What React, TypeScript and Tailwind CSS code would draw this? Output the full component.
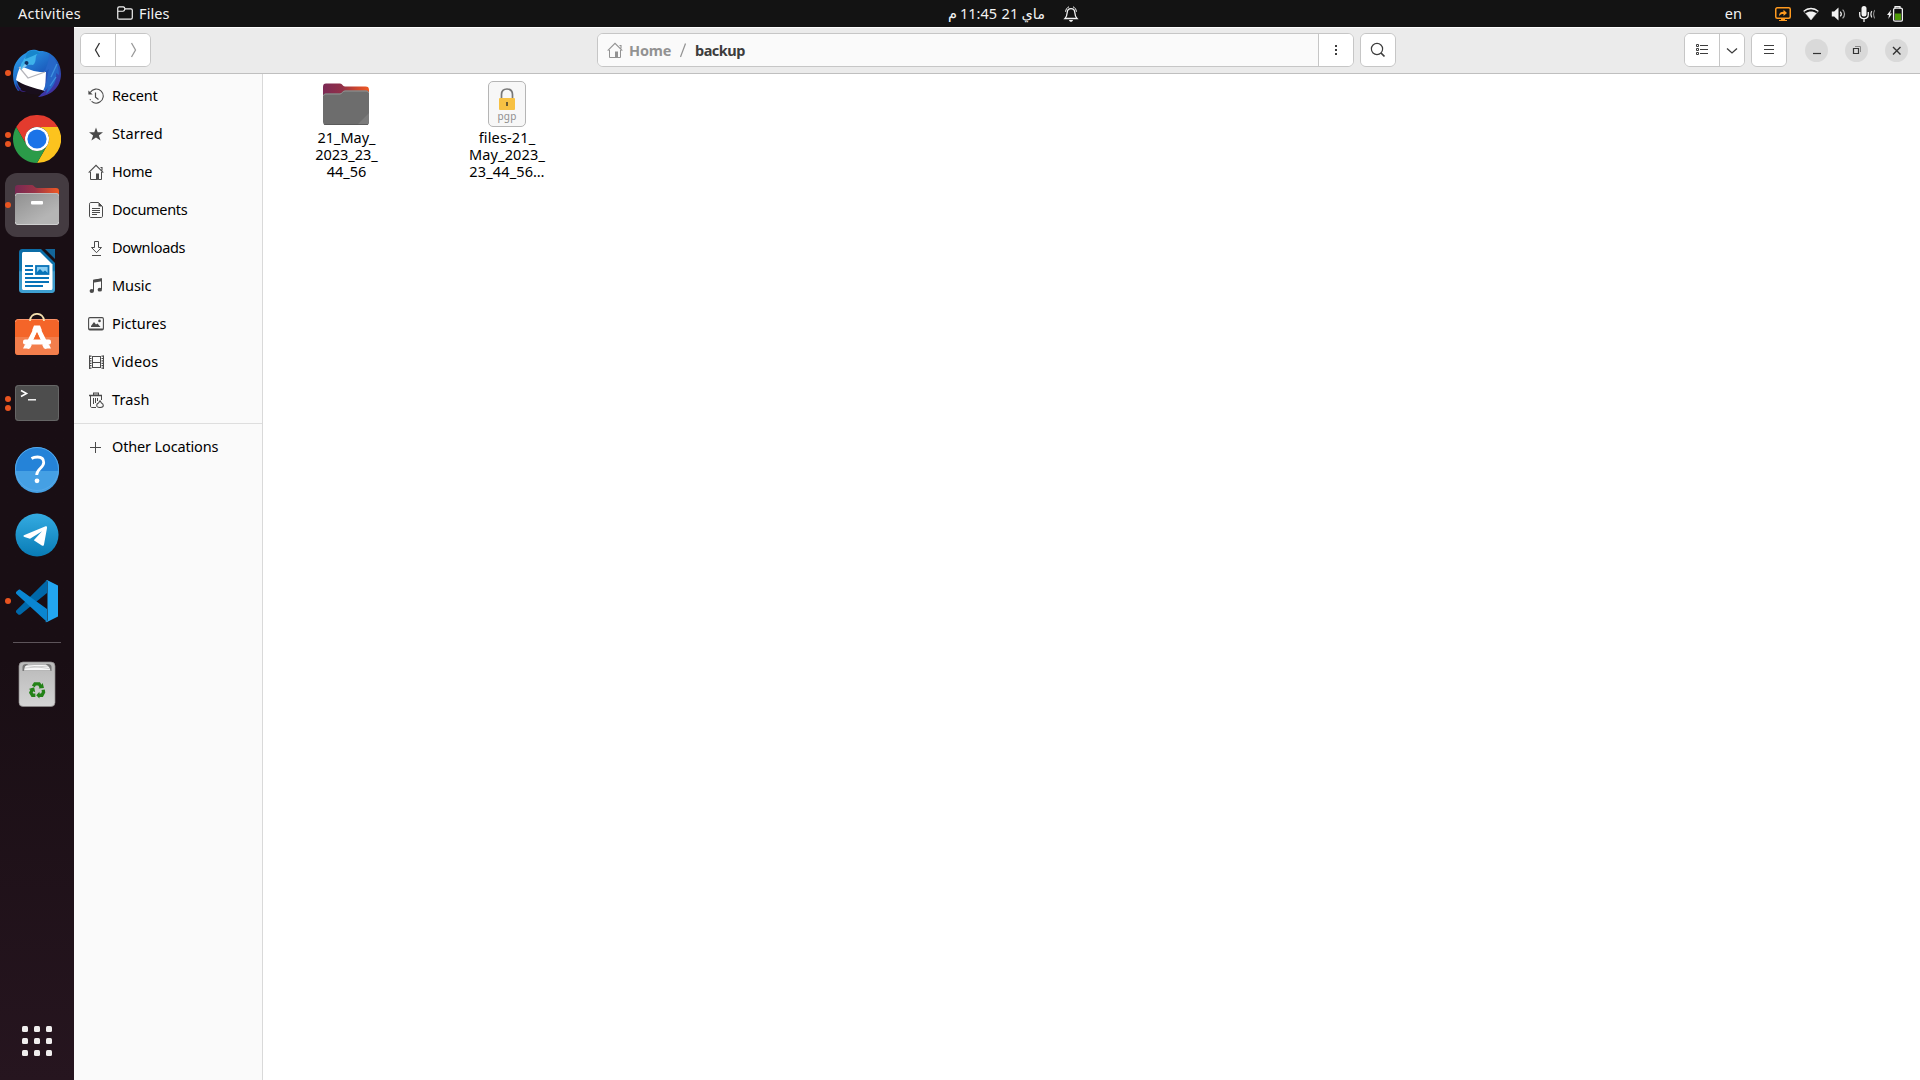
import React from "react";

const FONT = "font-['Noto_Sans','DejaVu_Sans',sans-serif]";

function S({ size = 16, className = "", children }: { size?: number; className?: string; children: React.ReactNode }) {
  return (
    <svg width={size} height={size} viewBox={`0 0 ${size} ${size}`} fill="none" className={`block shrink-0 ${className}`}>
      {children}
    </svg>
  );
}

/* ---------- symbolic icons ---------- */

const FolderSmall = () => (
  <S>
    <path d="M.75 12.5V2.2C.75 1.3 1.3.8 2.1.8H6.3C7 .8 7.2 1.2 7.5 1.7L8 2.8H13.9C14.8 2.8 15.3 3.3 15.3 4.2V11.6C15.3 12.5 14.8 13.2 13.9 13.2H2.1C1.2 13.2.75 12.8.75 12Z" stroke="#f2f2f2" strokeWidth="1.2" />
    <path d="M1 5.2H6C7 5.2 7.4 4.8 8 3" stroke="#f2f2f2" strokeWidth="1.1" />
  </S>
);

const Bell = () => (
  <S>
    <path d="M2 12.5C3.6 11 4 9 4.2 6.5C4.4 4 5.8 2.6 8 2.6S11.6 4 11.8 6.5C12 9 12.4 11 14 12.5Z" stroke="#f2f2f2" strokeWidth="1.3" />
    <path d="M2.6 5.8C2.8 3.2 4 1.6 6 .8M13.4 5.8C13.2 3.2 12 1.6 10 .8" stroke="#f2f2f2" strokeWidth="1" />
    <path d="M6 14h4c-.2 1.2-1 1.8-2 1.8S6.200 15.200 6 14Z" fill="#f2f2f2" />
  </S>
);

const ScreenShare = () => (
  <S>
    <rect x=".75" y="1.750" width="14.500" height="10.500" rx="1.500" stroke="#ff9a1f" strokeWidth="1.500" />
    <path d="M6 13h4v1h2v1H4v-1h2Z" fill="#ff9a1f" />
    <path d="M4 10.200C4 7.200 5.400 5.800 8.500 5.800V3.700L12 7 8.500 10V8C6.500 8 5 8.600 4 10.200Z" fill="#ff9a1f" />
  </S>
);

const Wifi = () => (
  <S>
    <path d="M8 14 .6 5.200C4.800 1.500 11.200 1.500 15.400 5.200Z" stroke="#8a8a8a" strokeWidth=".8" fill="#131313" />
    <path d="M.8 5.200C4.900 1.600 11.100 1.600 15.200 5.200" stroke="#f2f2f2" strokeWidth="1.300" />
    <path d="M8 14 2.600 7.300C5.600 4.900 10.400 4.900 13.400 7.300Z" fill="#f2f2f2" />
  </S>
);

const Volume = () => (
  <S>
    <path d="M.8 5.500H3.200L7.500 1.500V14.500L3.200 10.500H.8Z" fill="#f2f2f2" />
    <path d="M9.300 5.600C10.500 7 10.500 9 9.300 10.400" stroke="#f2f2f2" strokeWidth="1.200" />
    <path d="M11.600 3.600C14.200 6 14.200 10 11.600 12.400" stroke="#a8a8a8" strokeWidth="1.200" />
  </S>
);

const Mic = () => (
  <S>
    <rect x="2.500" y="0" width="5" height="10.500" rx="2.500" fill="#f2f2f2" />
    <path d="M.7 6V8.500C.7 11 2.500 12.600 5 12.600S9.300 11 9.300 8.500V6M5 12.600V16" stroke="#f2f2f2" strokeWidth="1.300" />
    <path d="M12.800 5C11.600 7 11.600 9.500 12.800 11.500" stroke="#dedede" strokeWidth="1.100" />
    <path d="M16 4C14.300 6.500 14.300 10 16 12.500" stroke="#8c8c8c" strokeWidth="1.100" />
  </S>
);

const Battery = () => (
  <S>
    <path d="M4.200 3.500 0 9H2L1.300 13 5 7.500H3Z" fill="#f2f2f2" />
    <path d="M8 2.600V.7h5v1.900" stroke="#f2f2f2" strokeWidth="1.200" />
    <rect x="6.600" y="2.200" width="8.800" height="13" rx="1.500" stroke="#f2f2f2" strokeWidth="1.300" />
    <rect x="8" y="7.500" width="6" height="6.500" fill="#4e9a06" />
  </S>
);

const House = ({ color = "#4a4a4a" }: { color?: string }) => (
  <S>
    <path d="M.7 8.700 8 1.400 15.300 8.700M12.500 3.500h1.500v3" stroke={color} strokeWidth="1.100" />
    <path d="M2.500 8v7.500H9M13.500 8v7.500H11" stroke={color} />
    <path d="M8 15.900V9.500h3v6.400Z" fill={color} />
  </S>
);

const G = "#4a4a4a";
const Recent = () => (
  <S>
    <path d="M2.200 4.500A7 7 0 1 1 1.500 10" stroke={G} strokeWidth="1.100" strokeDasharray="34 1.500 1 1.500" />
    <path d="M.4 2.400V6.400H4.700Z" fill={G} />
    <path d="M7.500 4.500V9.200L10.500 11.500" stroke={G} strokeWidth="1.200" />
  </S>
);
const Star = () => (
  <S>
    <path d="M8 1.600 9.700 6.300H15L10.900 9.500 12.600 14.600 8 11.500 3.400 14.600 5.100 9.500 1 6.300H6.300Z" fill={G} />
  </S>
);
const Doc = () => (
  <S>
    <path d="M1.500 2.200C1.500 1 2.100.5 3 .5H10.500L14.500 4.500V14C14.500 15 14 15.500 13 15.500H3C2 15.500 1.500 15 1.500 14Z" stroke={G} />
    <path d="M10.500.5V4.500H14.500Z" fill={G} />
    <path d="M4 6.500h8M4 8.500h8M4 10.500h8M4 12.500h5" stroke={G} />
  </S>
);
const Down = () => (
  <S>
    <path d="M6.500 1.500h4v6h3L8.500 12.700 3.500 7.500h3Z" stroke={G} />
    <path d="M4 15.500h9" stroke={G} />
  </S>
);
const Music = () => (
  <S>
    <path d="M5.500 13V2.500L13.500 1V11" stroke={G} />
    <path d="M5 1.800 14 .3V3.200L5 4.700Z" fill={G} />
    <ellipse cx="3.800" cy="13" rx="2.200" ry="1.900" fill={G} />
    <ellipse cx="11.800" cy="11.700" rx="2.200" ry="1.900" fill={G} />
  </S>
);
const Picture = () => (
  <S>
    <rect x=".6" y="1.600" width="14.800" height="12.300" rx="1.300" stroke={G} strokeWidth="1.100" />
    <path d="M1 12.500h14v1.500H1Z" fill={G} />
    <path d="M3 11V10L6 6 8 8.500 9.500 7.500 12.500 11Z" fill={G} />
    <circle cx="11.500" cy="4.900" r="1.300" fill={G} />
  </S>
);
const Film = () => (
  <S>
    <path d="M4.500 2v12M12.500 2v12M4 2.500h9M4 8.500h9M4 13.500h9" stroke={G} />
    <path d="M2.500 1.500V15M14.500 1.500V15" stroke={G} strokeWidth="2" strokeDasharray="1.200 1.200" />
    <path d="M1.500 1.500V15M15.500 1.500V15" stroke={G} strokeWidth="1" />
  </S>
);
const TrashSmall = () => (
  <S>
    <path d="M1 4V2.800h4V.6h6v2.200h3V4.200H1Z" fill={G} />
    <path d="M6 2h4" stroke="#fafafa" strokeWidth=".8" />
    <path d="M2.500 4v10c0 1 .5 1.500 1.500 1.500H8M13.500 4v4M5.500 6v6M7.500 6v5M9.500 6v3" stroke={G} />
    <path d="M12 8.800 10.500 11C9 11.500 8.500 13 9 14.500C10 15.800 13.500 15.800 15 14.500C15.600 13 14.500 11.500 13.500 11Z" stroke={G} strokeWidth="1.100" />
  </S>
);
const Plus = () => (
  <S>
    <path d="M2 8.500h11M7.500 3v11" stroke={G} />
  </S>
);

/* ---------- dock icons ---------- */

const Thunderbird = () => (
  <S size={48}>
    <defs>
      <linearGradient id="tb" x1="10" y1="2" x2="40" y2="46" gradientUnits="userSpaceOnUse">
        <stop stopColor="#2b9be8" />
        <stop offset=".5" stopColor="#1c60c0" />
        <stop offset="1" stopColor="#452a9c" />
      </linearGradient>
    </defs>
    <path d="M13 4C16 0 22 0 26 2C38 1 48 12 48 25C48 38 38 47 25 48C31 44 31 38 27 30L5 42C0 36-1 26 1 18C3 12 8 6 13 4Z" fill="url(#tb)" />
    <path d="M4 32 32 41C31 44 27 45.500 23 45.500C18 46 14 44.500 12 43C8 41 5 37 4 32Z" fill="#190e1c" />
    <path d="M3 34C5 39 8 42 13 42.500C10 44 6 42 4 39Z" fill="#352078" />
    <path d="M8 17C14 20 24 24 33 23L32 42C21 39 10 36 3 31C4 26 5 21 8 17Z" fill="#fff" />
    <path d="M6 18 15 29 32 23" stroke="#b5b5bb" strokeWidth="1.200" />
    <path d="M10 12C13 5 20 2 27 3C20 6 25 12 20 16C15 15 12 16 8 21C7 17 8 14 10 12Z" fill="#3eb2ea" />
    <path d="M14 4C18 0 24 1 28 5C23 4 20 8 12 10Z" fill="#1786cc" />
    <circle cx="13.500" cy="14" r="2" fill="#103264" />
    <path d="M12 15 8 20 14 17Z" fill="#89caee" />
    <path d="M36 5C36 14 33 17 32 23L36 20C34 27 34 34 30 42C32 42 34 40 35 38L33 45C40 39 44 32 43 24L46 26C46 18 43 9 36 5Z" fill="#2667c8" />
    <path d="M44 15 38 28M43 28 37 37" stroke="#4092df" strokeWidth="1.300" />
  </S>
);

const Chrome = () => (
  <S size={48}>
    <path d="M3.220 12A24 24 0 0 1 44.800 12H24A12 12 0 0 0 13.600 30Z" fill="#e33b2e" />
    <path d="M44.800 12A24 24 0 0 1 24 48L34.400 30A12 12 0 0 0 24 12Z" fill="#fcc31e" />
    <path d="M24 48A24 24 0 0 1 3.220 12L13.600 30A12 12 0 0 0 34.400 30Z" fill="#2b9b49" />
    <circle cx="24" cy="24" r="12" fill="#fff" />
    <circle cx="24" cy="24" r="9.600" fill="#1a73e8" />
  </S>
);

const FilesApp = () => (
  <S size={48}>
    <defs>
      <linearGradient id="fa" x1="2" y1="0" x2="46" y2="0" gradientUnits="userSpaceOnUse">
        <stop stopColor="#772953" />
        <stop offset=".45" stopColor="#9a3347" />
        <stop offset="1" stopColor="#f05a24" />
      </linearGradient>
      <linearGradient id="fb" x1="0" y1="12" x2="20" y2="44" gradientUnits="userSpaceOnUse">
        <stop stopColor="#8e8e8e" />
        <stop offset="1" stopColor="#b5b5b5" />
      </linearGradient>
    </defs>
    <path d="M2 7C2 5 3 4 5 4H19C21 4 21.500 7 24 7H43C45 7 46 8 46 10V24H2Z" fill="url(#fa)" />
    <rect x="2" y="12" width="44" height="32" rx="3" fill="url(#fb)" />
    <path d="M2.500 15C2.500 13 3.500 12.500 5 12.500H43C44.500 12.500 45.500 13 45.500 15" stroke="#c0bcbc" />
    <path d="M2.500 41C2.500 43 3.500 43.500 5 43.500H43C44.500 43.500 45.500 43 45.500 41" stroke="#d0d0d0" />
    <rect x="18" y="20" width="12" height="3.500" rx="1" fill="#fff" />
  </S>
);

const Writer = () => (
  <S size={48}>
    <defs>
      <linearGradient id="wr" x1="0" y1="2" x2="0" y2="46" gradientUnits="userSpaceOnUse">
        <stop stopColor="#0c6ca6" />
        <stop offset=".48" stopColor="#0f76ae" />
        <stop offset=".52" stopColor="#3994c4" />
        <stop offset="1" stopColor="#3ea0d2" />
      </linearGradient>
    </defs>
    <path d="M10 2H28L42 16V42C42 45 41 46 38 46H10C7 46 6 45 6 42V6C6 3 7 2 10 2Z" fill="url(#wr)" />
    <path d="M32 2H42V12Z" fill="#13669a" />
    <path d="M11 5H27L39.500 17.500V41C39.500 42.500 39 43 37.500 43H11C9.500 43 9 42.500 9 41V7C9 5.500 9.500 5 11 5Z" fill="#fff" />
    <path d="M12 19h8M12 23h8M12 27h8M12 31h24M12 35h24M12 39h18" stroke="#0873b8" strokeWidth="2" />
    <rect x="23" y="19" width="12.500" height="8" stroke="#0873b8" strokeWidth="1.800" fill="#8acdf2" />
    <path d="M24 27V25L27 22 30 25 32 23.500 35 26V27Z" fill="#0873b8" />
  </S>
);

const Software = () => (
  <S size={48}>
    <rect x="2" y="6" width="44" height="36" rx="3.500" fill="#f46529" />
    <path d="M2 24H46V38.500C46 41 45 42 42.500 42H5.500C3 42 2 41 2 38.500Z" fill="#f37e4c" />
    <path d="M2.500 9C2.500 7 4 6.500 5.500 6.500H42.500C44 6.500 45.500 7 45.500 9" stroke="#f9946c" />
    <path d="M17 8C17-1.500 31-1.500 31 8" stroke="#f3dfae" strokeWidth="1.800" />
    <path d="M24 14 13.500 35M24 14 34.500 35" stroke="#fff" strokeWidth="5" />
    <path d="M21 12.500h6l2 5h-10Z" fill="#fff" />
    <path d="M10 35.500h7l2-4h-7ZM38 35.500h-7l-2-4h7Z" fill="#fff" />
    <path d="M24 19 20.500 27h7Z" fill="#f46529" />
    <rect x="10" y="26.500" width="28" height="5" rx="2" fill="#fff" />
  </S>
);

const Terminal = () => (
  <S size={48}>
    <rect x="2" y="6" width="44" height="36" rx="3.500" fill="#4d4d4d" />
    <rect x="2.500" y="6.500" width="43" height="35" rx="3" stroke="#666" />
    <path d="M8 11.500 13.500 14.500 8 17.500" stroke="#fff" strokeWidth="1.600" />
    <path d="M15 20.800h8" stroke="#fff" strokeWidth="1.400" />
  </S>
);

const Help = () => (
  <S size={48}>
    <circle cx="24" cy="24" r="22" fill="#2583d8" />
    <path d="M2 26H46A22 22 0 0 1 2 26Z" fill="#45a0e4" />
    <circle cx="24" cy="24" r="21.500" stroke="#55a9e9" />
    <path d="M18.500 13.500C20.500 12.300 22.500 12 24.500 12C29 12 30.700 14.500 30.700 17.500C30.700 23 23.700 23.500 23.700 30" stroke="#fff" strokeWidth="2.800" />
    <circle cx="24" cy="35.800" r="2.400" fill="#fff" />
  </S>
);

const Telegram = () => (
  <S size={48}>
    <defs>
      <linearGradient id="tg" x1="0" y1="2" x2="0" y2="46" gradientUnits="userSpaceOnUse">
        <stop stopColor="#35ace2" />
        <stop offset="1" stopColor="#087bb5" />
      </linearGradient>
    </defs>
    <circle cx="24" cy="24" r="21.500" fill="url(#tg)" />
    <path d="M11.500 24 32 15.400C33.600 14.800 34.200 15.500 34 17L31 33.500C30.700 35 30 35.200 28.800 34.400L20.800 29.200 29 20.300 17 27.800 11.500 26C10 25.500 10 24.700 11.500 24Z" fill="#fff" />
  </S>
);

const VSCode = () => (
  <S size={48}>
    <path d="M34 3V16L7.500 37.500C6.700 38 5.800 38 5 37.300L3.300 35.500C2.800 34.800 2.800 34 3.500 33.300Z" fill="#0068a9" />
    <path d="M34 45V32L7.500 13C6.700 12.400 5.800 12.400 5 13.200L3.300 14.800C2.800 15.500 2.800 16.300 3.500 17Z" fill="#0a86d1" />
    <path d="M34 3 45 8.500V39.500L34 45C33 45.400 32 45 31.500 44.500C33 45 34.500 44.500 34.500 43V5C34.500 3.500 33 3 31.500 3.500Z" fill="#22a6f1" />
  </S>
);

const TrashApp = () => (
  <S size={48}>
    <defs>
      <linearGradient id="tr" x1="0" y1="8" x2="0" y2="47" gradientUnits="userSpaceOnUse">
        <stop stopColor="#bcbcbc" />
        <stop offset="1" stopColor="#d4d4d4" />
      </linearGradient>
    </defs>
    <rect x="6" y="2" width="36" height="44.500" rx="4" fill="url(#tr)" stroke="#8d8989" strokeWidth=".7" />
    <path d="M9.500 11V7C9.500 5 11 4 13 4H35C37 4 38.500 5 38.500 7V11Z" fill="#777" />
    <path d="M11 10.500 12 6.500 15 4.500H33L36 7 37.500 10.500Z" fill="#f8f8f8" />
    <path d="M12 8 35 6M14 5.500 36 8.500" stroke="#bbb" strokeWidth=".7" />
    <g transform="translate(24 30.500) scale(.82) translate(-24 -30)">
      <path d="M19.500 25 21.500 21.800H26.500L29 25.500M31.500 29 32 32 30 35.800H26M22 35.800H18.500L16.500 32.500 18.500 28.500" stroke="#238217" strokeWidth="4" />
      <path d="M26 27.500 32.500 27 31 21ZM27 31.500V39.800L23 35.800ZM14 28.300 20.500 26 21.800 32Z" fill="#238217" />
    </g>
  </S>
);

const DOCK: { icon: React.FC; dots: number; active?: boolean }[] = [
  { icon: Thunderbird, dots: 1 },
  { icon: Chrome, dots: 2 },
  { icon: FilesApp, dots: 1, active: true },
  { icon: Writer, dots: 0 },
  { icon: Software, dots: 0 },
  { icon: Terminal, dots: 2 },
  { icon: Help, dots: 0 },
  { icon: Telegram, dots: 0 },
  { icon: VSCode, dots: 1 },
];

function DockItem({ icon: Icon, dots, active }: { icon: React.FC; dots: number; active?: boolean }) {
  return (
    <div className="relative flex h-[66px] w-full shrink-0 items-center justify-center">
      <div className={`flex size-16 items-center justify-center rounded-xl ${active ? "bg-[#443b41]" : ""}`}>
        <Icon />
      </div>
      <div className="absolute inset-y-0 left-[5px] flex flex-col items-center justify-center gap-[3px]">
        {Array.from({ length: dots }, (_, i) => (
          <span key={i} className="size-[6px] rounded-full bg-[#e95420]" />
        ))}
      </div>
    </div>
  );
}

const PLACES: { label: string; icon: React.FC; track: string }[] = [
  { label: "Recent", icon: Recent, track: "tracking-[-0.15px]" },
  { label: "Starred", icon: Star, track: "tracking-[0.1px]" },
  { label: "Home", icon: House, track: "tracking-[-0.3px]" },
  { label: "Documents", icon: Doc, track: "tracking-[-0.3px]" },
  { label: "Downloads", icon: Down, track: "tracking-[-0.3px]" },
  { label: "Music", icon: Music, track: "tracking-[-0.1px]" },
  { label: "Pictures", icon: Picture, track: "tracking-[0px]" },
  { label: "Videos", icon: Film, track: "tracking-[0.2px]" },
  { label: "Trash", icon: TrashSmall, track: "tracking-[0.1px]" },
];

function Place({ label, icon: Icon, track }: { label: string; icon: React.FC; track: string }) {
  return (
    <div className="flex h-[38px] items-center gap-2 pl-[14px] text-black">
      <Icon />
      <span className={`whitespace-nowrap pb-[2px] leading-5 ${track}`}>{label}</span>
    </div>
  );
}

function FileItem({ icon, lines, className, track }: { icon: React.ReactNode; lines: string[]; className: string; track: string }) {
  return (
    <div className={`flex flex-col items-center ${className}`}>
      {icon}
      <div className={`mt-[1px] text-center leading-[17px] text-black ${track}`}>
        {lines.map((l) => (
          <div key={l} className="whitespace-nowrap">{l}</div>
        ))}
      </div>
    </div>
  );
}

const BigFolder = () => (
  <S size={48} className="mr-[2px]">
    <defs>
      <linearGradient id="bf" x1="1" y1="0" x2="47" y2="0" gradientUnits="userSpaceOnUse">
        <stop stopColor="#7c2a55" />
        <stop offset=".42" stopColor="#923048" />
        <stop offset=".7" stopColor="#c8432f" />
        <stop offset="1" stopColor="#f05a24" />
      </linearGradient>
    </defs>
    <path d="M1 7C1 4.500 2 3.500 4 3.500H18C20.500 3.500 20.500 6.500 23 6.500H43.500C46 6.500 47 7.500 47 10V25H1Z" fill="url(#bf)" />
    <path d="M1 17C1 14.500 2 13.500 4 13.500H18C20.500 13.500 20 10.500 23 10.500H44C46 10.500 47 11.500 47 13.500V41.500C47 44 46 45 44 45H4C2 45 1 44 1 41.500Z" fill="#6d6d6d" />
    <path d="M35 45 47 33V41.500C47 44 46 45 44 45Z" fill="#7b7b7b" />
    <path d="M1.500 16C1.700 14.500 2.500 14 4 14H18C20.500 14 20 11 23 11H44C45.500 11 46.300 11.500 46.500 13" stroke="#939393" />
    <path d="M2 44.500H46" stroke="#555" strokeWidth=".8" />
  </S>
);

const PgpIcon = () => (
  <div className="mt-px flex h-[46px] w-[38px] flex-col items-center rounded-[5px] border border-[#b5b5b5] bg-[#f7f7f7] pt-[6px]">
    <svg width="16" height="22" viewBox="0 0 16 22" fill="none" className="block shrink-0">
      <path d="M2.500 10V6.500C2.500 3 4.500 1 8 1S13.500 3 13.500 6.500V10" stroke="#777" strokeWidth="1.700" />
      <rect y="10" width="16" height="12" rx="1" fill="#f7c143" />
      <path d="M7 14h2v4H7Z" fill="#6b5a30" />
    </svg>
    <span className="text-[10px] leading-[12px] tracking-[0.2px] text-[#8f8f8f]">pgp</span>
  </div>
);

const Btn = "flex items-center justify-center bg-white";
const Box = "flex h-[34px] shrink-0 overflow-hidden rounded-md border border-[#c6c6c6] bg-white";

export default function App() {
  return (
    <div className={`flex h-[1080px] w-[1920px] flex-col overflow-hidden bg-white text-[14.500px] ${FONT}`}>
      <header className="flex h-[27px] shrink-0 items-center bg-[#131313] pr-[17px] pl-[18px] leading-5 text-[#f2f2f2]">
        <span className="w-[99px] pb-[2px] tracking-[0.25px]">Activities</span>
        <FolderSmall />
        <span className="ml-[6px] w-[809px] pb-[2px] tracking-[0.1px]">Files</span>
        <div className="flex w-[97px] pb-[2px] whitespace-nowrap">
          <span className="w-3">م</span>
          <span className="w-[42px]">11:45</span>
          <span className="w-5">21</span>
          <span>ماي</span>
        </div>
        <div className="ml-[18px]"><Bell /></div>
        <span className="ml-auto mr-[33px] pb-[2px]">en</span>
        <div className="flex gap-3">
          <ScreenShare />
          <Wifi />
          <Volume />
          <Mic />
          <Battery />
        </div>
      </header>

      <div className="flex min-h-0 flex-1">
        <nav className="flex w-[74px] shrink-0 flex-col items-center bg-linear-to-b from-[#190e14] from-60% to-[#26151f] pt-[13px]">
          {DOCK.map((d, i) => (
            <DockItem key={i} {...d} />
          ))}
          <div className="my-2 h-px w-12 shrink-0 bg-[#5d545a]" />
          <DockItem icon={TrashApp} dots={0} />
          <div className="mt-auto mb-6 grid grid-cols-3 gap-[6px]">
            {Array.from({ length: 9 }, (_, i) => (
              <span key={i} className="size-[6px] rounded-[1.500px] bg-[#f0eeee]" />
            ))}
          </div>
        </nav>

        <main className="flex min-w-0 flex-1 flex-col">
          <div className="flex h-[47px] shrink-0 items-center border-t border-b border-t-white border-b-[#bfbfbf] bg-[#ebebeb] pb-px pl-[6px]">
            <div className={`${Box} w-[71px]`}>
              <div className={`${Btn} w-[35px] border-r border-[#c6c6c6]`}>
                <S><path d="M9.500 1 5.500 8 9.500 15" stroke="#333" strokeWidth="1.300" /></S>
              </div>
              <div className={`${Btn} flex-1 bg-[#fafafa]`}>
                <S><path d="M6.500 1 10.500 8 6.500 15" stroke="#999" strokeWidth="1.300" /></S>
              </div>
            </div>
            <div className={`${Box} ml-[446px] w-[757px] font-bold`}>
              <div className="flex flex-1 items-center bg-[#fafafa] pl-[9px] leading-5 text-[#929292]">
                <House color="#929292" />
                <span className="ml-[6px] w-[51px] pb-px tracking-[-0.200px]">Home</span>
                <svg width="6" height="16" viewBox="0 0 6 16" fill="none" className="block"><path d="M5.500 1.500.5 15" stroke="#929292" strokeWidth="1.200" /></svg>
                <span className="ml-[9px] pb-px tracking-[-0.5px] text-[#3d3d3d]">backup</span>
              </div>
              <div className={`${Btn} w-[35px] border-l border-[#c6c6c6]`}>
                <S><path d="M7 3h2v2H7ZM7 7h2v2H7ZM7 11h2v2H7Z" fill="#3d3d3d" /></S>
              </div>
            </div>
            <div className={`${Box} ml-[6px] w-9`}>
              <div className={`${Btn} flex-1`}>
                <S><circle cx="7" cy="7" r="5.600" stroke="#3d3d3d" strokeWidth="1.200" /><path d="M11 11 14.500 14.500" stroke="#3d3d3d" strokeWidth="1.700" /></S>
              </div>
            </div>
            <div className={`${Box} ml-[288px] w-[61px]`}>
              <div className={`${Btn} w-[35px] border-r border-[#c6c6c6]`}>
                <S><path d="M6 3.500h8M6 7.500h8M6 11.500h8M2.500 2.500h2v2h-2ZM2.500 6.500h2v2h-2ZM2.500 10.500h2v2h-2Z" stroke="#3d3d3d" /></S>
              </div>
              <div className={`${Btn} flex-1`}>
                <S><path d="M3 6.500 8 11 13 6.500" stroke="#3d3d3d" strokeWidth="1.300" /></S>
              </div>
            </div>
            <div className={`${Box} ml-[6px] w-9`}>
              <div className={`${Btn} flex-1`}>
                <S><path d="M3 3.500h10M3 7.500h10M3 11.500h10" stroke="#3d3d3d" /></S>
              </div>
            </div>
            <div className="ml-[18px] flex gap-[17px]">
              <div className="flex size-[23px] items-center justify-center rounded-full bg-[#d9d9d9]">
                <svg width="23" height="23" fill="none"><path d="M8 14.500h8" stroke="#333" strokeWidth="1.200" /></svg>
              </div>
              <div className="flex size-[23px] items-center justify-center rounded-full bg-[#d9d9d9]">
                <svg width="23" height="23" fill="none"><path d="M8.500 9.500h5v5h-5Z" stroke="#333" strokeWidth="1.200" /><path d="M10 7.500h5.500v5.500" stroke="#888" /></svg>
              </div>
              <div className="flex size-[23px] items-center justify-center rounded-full bg-[#d9d9d9]">
                <svg width="23" height="23" fill="none"><path d="M8 8 15.500 15.500M15.500 8 8 15.500" stroke="#333" strokeWidth="1.400" /></svg>
              </div>
            </div>
          </div>

          <div className="flex min-h-0 flex-1">
            <aside className="w-[189px] shrink-0 border-r border-[#d9d9d9] bg-[#fafafa] pt-[3px]">
              {PLACES.map((p) => (
                <Place key={p.label} {...p} />
              ))}
              <div className="my-1 h-px bg-[#dedede]" />
              <Place label="Other Locations" icon={Plus} track="tracking-[-0.15px]" />
            </aside>
            <section className="flex flex-1 items-start pt-[6px]">
              <FileItem className="ml-[3px] w-[161px]" track="tracking-[0px]" icon={<BigFolder />} lines={["21_May_", "2023_23_", "44_56"]} />
              <FileItem className="w-[160px]" track="tracking-[0.15px]" icon={<div className="h-12"><PgpIcon /></div>} lines={["files-21_", "May_2023_", "23_44_56…"]} />
            </section>
          </div>
        </main>
      </div>
    </div>
  );
}
